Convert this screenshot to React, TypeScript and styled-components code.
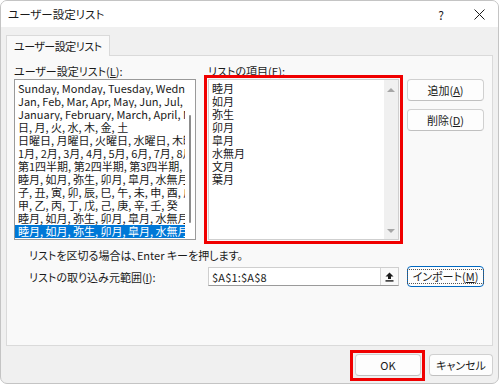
import styled, { createGlobalStyle } from 'styled-components';

const GlobalStyle = createGlobalStyle`
    *, *::before, *::after {
        box-sizing: border-box;
    }
    html, body {
        margin: 0;
        padding: 0;
        background: #ffffff;
    }
    body {
        font-family: "Noto Sans CJK JP", "Noto Sans", sans-serif;
        font-size: 11px;
        font-feature-settings: "palt";
        color: #1a1a1a;
    }
`;

const Window = styled.div`
    width: 499px;
    height: 384px;
    border: 1px solid #c4c4c4;
    border-radius: 7px;
    overflow: hidden;
    display: flex;
    flex-direction: column;
    background: #f0f0f0;
`;

const TitleBar = styled.div`
    height: 26px;
    background: #ffffff;
    display: flex;
    align-items: center;
    padding-left: 7px;
    font-size: 11.5px;
`;

const TitleText = styled.div`
    flex: 1;
`;

const TitleButton = styled.div`
    width: 38px;
    height: 26px;
    display: flex;
    align-items: center;
    justify-content: center;
    font-size: 12px;
`;

const Body = styled.div`
    flex: 1;
    display: flex;
    flex-direction: column;
    padding: 8px 5px 0 5px;
`;

const TabStrip = styled.div`
    display: flex;
`;

const Tab = styled.div`
    position: relative;
    z-index: 1;
    height: 21px;
    padding: 0 7px 0 7px;
    display: flex;
    align-items: center;
    background: #f9f9f9;
    border: 1px solid #dadada;
    border-bottom: none;
    margin-bottom: -1px;
    font-size: 11px;
    letter-spacing: -0.5px;
    white-space: nowrap;
`;

const Panel = styled.div`
    height: 291px;
    background: #f9f9f9;
    border: 1px solid #dadada;
    padding: 8px 7px 0 7px;
    display: flex;
    flex-direction: column;
`;

const ListsRow = styled.div`
    display: flex;
`;

const Column = styled.div<{ $width: number; $gap: number }>`
    width: ${p => p.$width}px;
    margin-right: ${p => p.$gap}px;
    display: flex;
    flex-direction: column;
`;

const Label = styled.div`
    height: 15px;
    line-height: 15px;
    white-space: nowrap;
`;

const ListBox = styled.div`
    height: 161px;
    border: 1px solid #9a9a9a;
    background: #ffffff;
    display: flex;
`;

const ListLines = styled.div`
    flex: 1;
    min-width: 0;
    padding-top: 2px;
`;

const ListLine = styled.div<{ $selected?: boolean }>`
    height: 13px;
    line-height: 13px;
    padding-left: 3px;
    white-space: nowrap;
    overflow: hidden;
    background: ${p => (p.$selected ? '#0078d7' : 'transparent')};
    color: ${p => (p.$selected ? '#ffffff' : '#1a1a1a')};
`;

const ThinScroll = styled.div`
    width: 10px;
    display: flex;
    justify-content: center;
`;

const ThinThumb = styled.div`
    width: 2px;
    height: 108px;
    margin-top: 35px;
    background: #8c8c8c;
    border-radius: 1px;
`;

const ItemsBox = styled.div`
    height: 161px;
    border: 1px solid #cfcfcf;
    background: #ffffff;
    display: flex;
    outline: 3px solid #f00000;
    outline-offset: 1px;
`;

const ItemsText = styled.div`
    flex: 1;
    padding: 2px 0 0 3px;
`;

const ItemLine = styled.div`
    height: 13px;
    line-height: 13px;
`;

const ScrollTrack = styled.div`
    width: 14px;
    background: #f0f0f0;
    display: flex;
    flex-direction: column;
    justify-content: space-between;
    align-items: center;
    padding: 8px 0 6px;
`;

const Arrow = styled.div<{ $down?: boolean }>`
    width: 0;
    height: 0;
    border-left: 4px solid transparent;
    border-right: 4px solid transparent;
    ${p => (p.$down ? 'border-top: 4px solid #a6a6a6;' : 'border-bottom: 4px solid #a6a6a6;')}
`;

const ButtonColumn = styled.div`
    width: 77px;
    padding-top: 15px;
    display: flex;
    flex-direction: column;
    gap: 8px;
`;

const Button = styled.button<{ $width?: number; $focused?: boolean }>`
    width: ${p => p.$width ?? 77}px;
    height: ${p => (p.$focused ? 21 : 22)}px;
    padding: 0;
    background: #fdfdfd;
    border: 1px solid ${p => (p.$focused ? '#0067c0' : '#d0d0d0')};
    border-bottom-color: ${p => (p.$focused ? '#0067c0' : '#c0c0c0')};
    border-radius: 4px;
    font-family: inherit;
    font-size: 11px;
    font-feature-settings: "palt";
    color: #1a1a1a;
    white-space: nowrap;
    display: flex;
    align-items: center;
    justify-content: center;
`;

const FocusRing = styled.span`
    border: 1px dotted #555;
    padding: 0 5px;
    line-height: 13px;
    white-space: nowrap;
`;

const Marker = styled.div`
    display: flex;
    border: 3px solid #f00000;
    padding: 1px 1px 2px 2px;
    margin: -4px -4px -5px -5px;
`;

const Hint = styled.div`
    margin-top: 8px;
    padding-left: 15px;
    height: 14px;
    line-height: 14px;
`;

const RangeRow = styled.div`
    display: flex;
    align-items: center;
    margin-top: 4px;
`;

const RangeLabel = styled.div`
    width: 194px;
    padding-left: 15px;
    white-space: nowrap;
`;

const RangeInput = styled.div`
    width: 191px;
    height: 19px;
    margin-right: 8px;
    border: 1px solid #cfcfcf;
    border-bottom-color: #9a9a9a;
    background: #ffffff;
    display: flex;
    align-items: center;
`;

const RangeValue = styled.div`
    flex: 1;
    padding-left: 3px;
    letter-spacing: 0.2px;
`;

const PickButton = styled.div`
    width: 18px;
    height: 17px;
    border-left: 1px solid #d6d6d6;
    background: #f9f9f9;
    display: flex;
    align-items: center;
    justify-content: center;
`;

const Footer = styled.div`
    display: flex;
    justify-content: flex-end;
    gap: 8px;
    padding: 8px 0 0 0;
`;

const leftItems = [
    'Sunday, Monday, Tuesday, Wednesday, Thursday, Friday, Saturday',
    'Jan, Feb, Mar, Apr, May, Jun, Jul, Aug, Sep, Oct, Nov, Dec',
    'January, February, March, April, May, June, July',
    '日, 月, 火, 水, 木, 金, 土',
    '日曜日, 月曜日, 火曜日, 水曜日, 木曜日, 金曜日, 土曜日',
    '1月, 2月, 3月, 4月, 5月, 6月, 7月, 8月, 9月',
    '第1四半期, 第2四半期, 第3四半期, 第4四半期',
    '睦月, 如月, 弥生, 卯月, 皐月, 水無月, 文月, 葉月',
    '子, 丑, 寅, 卯, 辰, 巳, 午, 未, 申, 酉, 戌, 亥',
    '甲, 乙, 丙, 丁, 戊, 己, 庚, 辛, 壬, 癸',
    '睦月, 如月, 弥生, 卯月, 皐月, 水無月, 文月, 葉月',
    '睦月, 如月, 弥生, 卯月, 皐月, 水無月, 文月, 葉月',
];

const monthItems = ['睦月', '如月', '弥生', '卯月', '皐月', '水無月', '文月', '葉月'];

function CloseIcon() {
    return (
        <svg width="11" height="11" viewBox="0 0 11 11">
            <path d="M0.5 0.5 L10.5 10.5 M10.5 0.5 L0.5 10.5" stroke="#1a1a1a" strokeWidth="1" fill="none" />
        </svg>
    );
}

function PickIcon() {
    return (
        <svg width="9" height="10" viewBox="0 0 9 10">
            <path d="M4.5 0.5 L8.5 4.5 L6 4.5 L6 7 L3 7 L3 4.5 L0.5 4.5 Z" fill="#1a1a1a" />
            <rect x="0.5" y="8.2" width="8" height="1.4" fill="#1a1a1a" />
        </svg>
    );
}

export default function App() {
    return (
        <>
            <GlobalStyle />
            <Window>
                <TitleBar>
                    <TitleText>ユーザー設定リスト</TitleText>
                    <TitleButton>?</TitleButton>
                    <TitleButton>
                        <CloseIcon />
                    </TitleButton>
                </TitleBar>
                <Body>
                    <TabStrip>
                        <Tab>ユーザー設定リスト</Tab>
                    </TabStrip>
                    <Panel>
                        <ListsRow>
                            <Column $width={182} $gap={12}>
                                <Label>ユーザー設定リスト(<u>L</u>):</Label>
                                <ListBox>
                                    <ListLines>
                                        {leftItems.map((item, i) => (
                                            <ListLine key={i} $selected={i === leftItems.length - 1}>
                                                {item}
                                            </ListLine>
                                        ))}
                                    </ListLines>
                                    <ThinScroll>
                                        <ThinThumb />
                                    </ThinScroll>
                                </ListBox>
                            </Column>
                            <Column $width={191} $gap={8}>
                                <Label>リストの項目(<u>E</u>):</Label>
                                <ItemsBox>
                                    <ItemsText>
                                        {monthItems.map(m => (
                                            <ItemLine key={m}>{m}</ItemLine>
                                        ))}
                                    </ItemsText>
                                    <ScrollTrack>
                                        <Arrow />
                                        <Arrow $down />
                                    </ScrollTrack>
                                </ItemsBox>
                            </Column>
                            <ButtonColumn>
                                <Button>追加(<u>A</u>)</Button>
                                <Button>削除(<u>D</u>)</Button>
                            </ButtonColumn>
                        </ListsRow>
                        <Hint>リストを区切る場合は、Enter キーを押します。</Hint>
                        <RangeRow>
                            <RangeLabel>リストの取り込み元範囲(<u>I</u>):</RangeLabel>
                            <RangeInput>
                                <RangeValue>$A$1:$A$8</RangeValue>
                                <PickButton>
                                    <PickIcon />
                                </PickButton>
                            </RangeInput>
                            <Button $focused>
                                <FocusRing>インポート(<u>M</u>)</FocusRing>
                            </Button>
                        </RangeRow>
                    </Panel>
                    <Footer>
                        <Marker>
                            <Button $width={66}>OK</Button>
                        </Marker>
                        <Button $width={64}>キャンセル</Button>
                    </Footer>
                </Body>
            </Window>
        </>
    );
}
